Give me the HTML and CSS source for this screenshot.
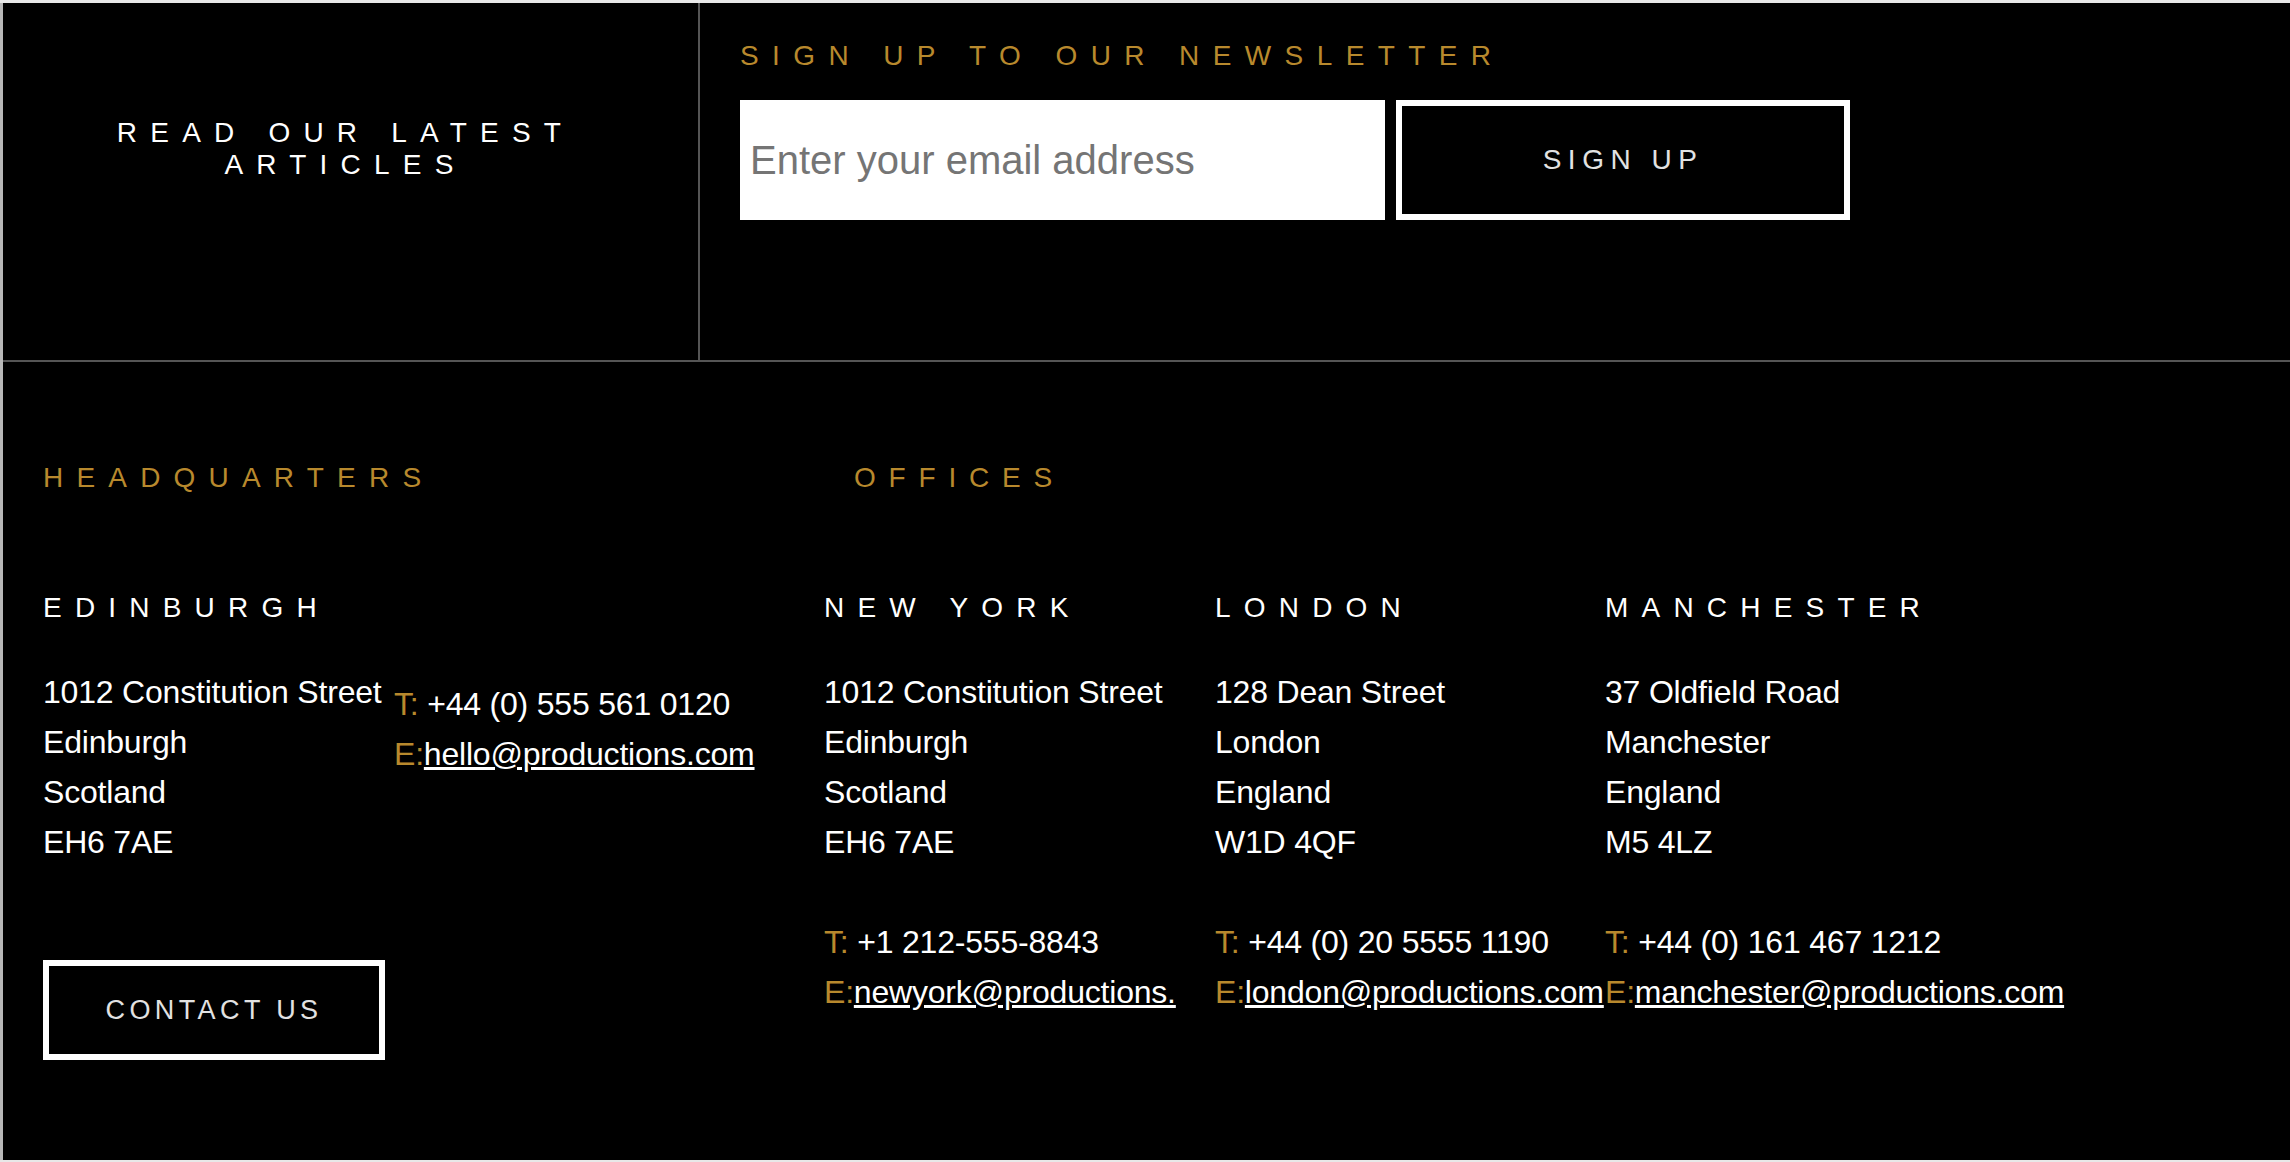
FILE: index.html
```html
<!DOCTYPE html>
<html lang="en">
<head>
<meta charset="utf-8">
<title>Footer</title>
<link rel="stylesheet" href="styles.css">
</head>
<body>
<div class="frame">
  <section class="top">
    <div class="articles">
      <a class="articles-link" href="#">READ OUR LATEST<br>ARTICLES</a>
    </div>
    <div class="newsletter">
      <h2 class="caps gold newsletter-title">SIGN UP TO OUR NEWSLETTER</h2>
      <form class="signup">
        <input class="signup-input" type="email" placeholder="Enter your email address">
        <button class="outline-btn signup-btn" type="button">SIGN UP</button>
      </form>
    </div>
  </section>

  <section class="locations">
    <div class="loc-head">
      <h2 class="caps gold hq-title">HEADQUARTERS</h2>
      <h2 class="caps gold offices-title">OFFICES</h2>
    </div>

    <div class="loc-cols">
      <div class="hq">
        <h3 class="caps city">EDINBURGH</h3>
        <div class="hq-body">
          <p class="address">1012 Constitution Street<br>Edinburgh<br>Scotland<br>EH6 7AE</p>
          <p class="contact hq-contact"><span class="gold">T:</span> +44 (0) 555 561 0120<br><span class="gold">E:</span><a href="#">hello@productions.com</a></p>
        </div>
        <a class="outline-btn contact-btn" href="#">CONTACT US</a>
      </div>

      <div class="office">
        <h3 class="caps city">NEW YORK</h3>
        <p class="address">1012 Constitution Street<br>Edinburgh<br>Scotland<br>EH6 7AE</p>
        <p class="contact office-contact"><span class="gold">T:</span> +1 212-555-8843<br><span class="gold">E:</span><a href="#">newyork@productions.</a></p>
      </div>

      <div class="office">
        <h3 class="caps city">LONDON</h3>
        <p class="address">128 Dean Street<br>London<br>England<br>W1D 4QF</p>
        <p class="contact office-contact"><span class="gold">T:</span> +44 (0) 20 5555 1190<br><span class="gold">E:</span><a href="#">london@productions.com</a></p>
      </div>

      <div class="office">
        <h3 class="caps city">MANCHESTER</h3>
        <p class="address">37 Oldfield Road<br>Manchester<br>England<br>M5 4LZ</p>
        <p class="contact office-contact"><span class="gold">T:</span> +44 (0) 161 467 1212<br><span class="gold">E:</span><a href="#">manchester@productions.com</a></p>
      </div>
    </div>
  </section>
</div>
</body>
</html>
```

FILE: styles.css
```css
html, body {
  margin: 0;
  padding: 0;
}

body {
  background: #e8e8e8;
  font-family: "Liberation Sans", Arial, Helvetica, sans-serif;
  color: #fff;
  overflow: hidden;
}

.frame {
  margin: 3px 0 2px 0;
  height: 1157px;
  box-sizing: border-box;
  border-left: 3px solid #b8b8b8;
  background: #000;
  display: flex;
  flex-direction: column;
}

.caps {
  font-size: 28px;
  line-height: 32px;
  font-weight: normal;
  letter-spacing: 13.2px;
  margin: 0;
}

.gold {
  color: #b8892d;
}

/* ---------- top band ---------- */
.top {
  display: flex;
  height: 359px;
  box-sizing: border-box;
  border-bottom: 2px solid #555;
}

.articles {
  width: 697px;
  box-sizing: border-box;
  border-right: 2px solid #555;
  padding: 114px 10px 0 0;
  text-align: center;
}

.articles-link {
  color: #fff;
  text-decoration: none;
  font-size: 28px;
  line-height: 32px;
  letter-spacing: 13.2px;
}

.newsletter {
  flex: 1;
  padding: 37px 0 0 40px;
}

.newsletter-title {
  margin-bottom: 28px;
  letter-spacing: 13.4px;
}

.signup {
  display: flex;
  gap: 11px;
  margin: 0;
}

.signup-input {
  width: 645px;
  height: 120px;
  box-sizing: border-box;
  border: 0;
  padding: 0 0 0 10px;
  margin: 0;
  background: #fff;
  font-family: inherit;
  font-size: 40px;
  color: #333;
  outline: none;
}

.signup-input::placeholder {
  color: #757575;
}

.outline-btn {
  display: flex;
  align-items: center;
  justify-content: center;
  box-sizing: border-box;
  border: 6px solid #fff;
  background: #000;
  color: #e2e2e2;
  font-family: inherit;
  text-decoration: none;
  padding: 0;
  margin: 0;
}

.signup-btn {
  width: 454px;
  height: 120px;
  font-size: 28px;
  letter-spacing: 6.5px;
}

/* ---------- locations ---------- */
.locations {
  padding: 100px 0 0 40px;
}

.loc-head {
  display: flex;
}

.hq-title {
  flex: 0 0 811px;
}

.offices-title {
  letter-spacing: 12.8px;
}

.loc-cols {
  display: grid;
  grid-template-columns: 781px 391px 390px 1fr;
  margin-top: 98px;
}

.city {
  color: #fff;
  margin-bottom: 43px;
}

.address,
.contact {
  margin: 0;
  font-size: 32px;
  line-height: 50px;
  letter-spacing: -0.2px;
}

.contact a {
  color: #fff;
  text-decoration: underline;
}

.hq-body {
  display: flex;
}

.hq-body .address {
  flex: 0 0 351px;
}

.hq-contact {
  padding-top: 12px;
}

.office-contact {
  margin-top: 50px;
  white-space: nowrap;
}

.contact-btn {
  width: 342px;
  height: 100px;
  margin-top: 93px;
  font-size: 27px;
  letter-spacing: 4.4px;
}
```
